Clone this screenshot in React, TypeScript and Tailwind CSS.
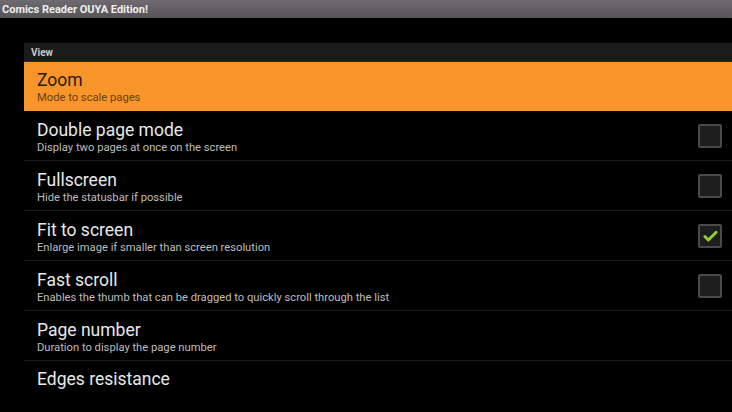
import { Check } from 'lucide-react';

type Pref = {
  title: string;
  summary?: string;
  checkbox?: boolean;
  checked?: boolean;
  active?: boolean;
};

const prefs: Pref[] = [
  { title: 'Zoom', summary: 'Mode to scale pages', active: true },
  { title: 'Double page mode', summary: 'Display two pages at once on the screen', checkbox: true },
  { title: 'Fullscreen', summary: 'Hide the statusbar if possible', checkbox: true },
  { title: 'Fit to screen', summary: 'Enlarge image if smaller than screen resolution', checkbox: true, checked: true },
  { title: 'Fast scroll', summary: 'Enables the thumb that can be dragged to quickly scroll through the list', checkbox: true },
  { title: 'Page number', summary: 'Duration to display the page number' },
  { title: 'Edges resistance' },
];

const CheckBox = ({ checked }: { checked?: boolean }) => (
  <div className="w-[24px] h-[24px] rounded-[2px] border-2 border-[#4a4a4a] bg-[#1e1e1e] flex items-center justify-center">
    {checked && <Check size={17} strokeWidth={4} className="text-[#8fd12f]" />}
  </div>
);

const App = () => {
  return (
    <div className="w-[732px] h-[412px] bg-black overflow-hidden font-['Roboto',sans-serif]">
      {/* barra de titulo */}
      <div className="h-[18px] bg-gradient-to-b from-[#6e6c70] to-[#555357] flex items-center px-[2px]">
        <span className="text-[11px] font-bold text-[#eeeeee] leading-none">Comics Reader OUYA Edition!</span>
      </div>

      <div className="pl-[24px] pt-[25px]">
        <div className="h-[19px] bg-[#1b1b1b] flex items-center pl-[7px] border-b border-[#2a2a2a]">
          <span className="text-[10px] font-bold text-[#c8c8c8]">View</span>
        </div>

        {prefs.map((p, i) => (
          <div
            key={p.title}
            className={
              p.active
                ? 'relative h-[49px] bg-[#f7952a] pt-[8px] pl-[13px] pr-[10px]'
                : i === prefs.length - 1
                  ? 'relative h-[50px] pt-[8px] pl-[13px] pr-[10px]'
                  : 'relative h-[50px] border-b border-[#1a1a1a] pt-[9px] pl-[13px] pr-[10px]'
            }
          >
            <div className="flex flex-col">
              <span className={p.active ? 'text-[17.5px] leading-[21px] text-[#2a1a08]' : 'text-[17.5px] leading-[21px] text-[#e8e8e8]'}>
                {p.title}
              </span>
              {p.summary && (
                <span className={p.active ? 'text-[11.2px] leading-[14px] text-[#6a3f10]' : 'text-[11.2px] leading-[14px] text-[#bdbdbd]'}>
                  {p.summary}
                </span>
              )}
            </div>
            {p.checkbox && (
              <div className="absolute right-[10px] top-[13px]">
                <CheckBox checked={p.checked} />
              </div>
            )}
          </div>
        ))}
      </div>
    </div>
  );
};

export default App;
